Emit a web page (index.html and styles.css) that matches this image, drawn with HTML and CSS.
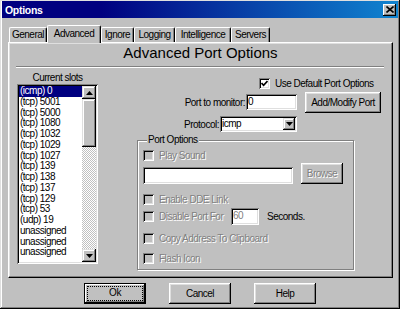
FILE: index.html
```html
<!DOCTYPE html>
<html lang="en">
<head>
    <meta charset="UTF-8">
    <title>Options</title>
    <link rel="stylesheet" href="styles.css">
</head>
<body>
<div class="window">
    <div class="titlebar">
        <span class="title">Options</span>
        <span class="close-btn">
            <svg width="8" height="7" viewBox="0 0 8 7"><path d="M0.5 0.5 L7.5 6.5 M7.5 0.5 L0.5 6.5" stroke="#000" stroke-width="1.6" fill="none"/></svg>
        </span>
    </div>

    <div class="tabs">
        <div class="tab tab-general">General</div>
        <div class="tab tab-advanced active">Advanced</div>
        <div class="tab tab-ignore">Ignore</div>
        <div class="tab tab-logging">Logging</div>
        <div class="tab tab-intel">Intelligence</div>
        <div class="tab tab-servers">Servers</div>
    </div>

    <div class="panel">
        <h1 class="heading">Advanced Port Options</h1>
        <div class="divider"></div>

        <div class="panel-body">
            <!-- slot list -->
            <div class="slots">
                <div class="slots-label">Current slots</div>
                <div class="listbox">
                    <ul class="list-items">
                        <li class="selected">(icmp) 0</li>
                        <li>(tcp) 5001</li>
                        <li>(tcp) 5000</li>
                        <li>(tcp) 1080</li>
                        <li>(tcp) 1032</li>
                        <li>(tcp) 1029</li>
                        <li>(tcp) 1027</li>
                        <li>(tcp) 139</li>
                        <li>(tcp) 138</li>
                        <li>(tcp) 137</li>
                        <li>(tcp) 129</li>
                        <li>(tcp) 53</li>
                        <li>(udp) 19</li>
                        <li>unassigned</li>
                        <li>unassigned</li>
                        <li>unassigned</li>
                    </ul>
                    <div class="scrollbar">
                        <div class="scroll-btn">
                            <svg width="7" height="4" viewBox="0 0 7 4"><path d="M3.5 0 L7 4 L0 4 Z" fill="#000"/></svg>
                        </div>
                        <div class="scroll-thumb"></div>
                        <div class="scroll-track"></div>
                        <div class="scroll-btn">
                            <svg width="7" height="4" viewBox="0 0 7 4"><path d="M0 0 L7 0 L3.5 4 Z" fill="#000"/></svg>
                        </div>
                    </div>
                </div>
            </div>

            <!-- port settings -->
            <div class="port-settings">
                <div class="check-row default-row">
                    <span class="check">
                        <svg width="7" height="7" viewBox="0 0 7 7"><path d="M0.5 3 L2.6 5.3 L6.5 1" stroke="#000" stroke-width="1.7" fill="none"/></svg>
                    </span>
                    <span>Use Default Port Options</span>
                </div>

                <div class="field-grid">
                    <div class="field">
                        <span>Port to monitor:</span>
                        <span class="textbox port-input">0</span>
                    </div>
                    <button class="btn btn-add">Add/Modify Port</button>
                    <div class="field">
                        <span>Protocol:</span>
                        <span class="textbox combo">
                            <span>icmp</span>
                            <span class="combo-btn">
                                <svg width="7" height="4" viewBox="0 0 7 4"><path d="M0 0 L7 0 L3.5 4 Z" fill="#000"/></svg>
                            </span>
                        </span>
                    </div>
                </div>

                <fieldset class="group">
                    <legend>Port Options</legend>
                    <div class="check-row">
                        <span class="check disabled"></span>
                        <span class="off">Play Sound</span>
                    </div>
                    <div class="sound-row">
                        <span class="textbox sound-input"></span>
                        <button class="btn btn-browse off" disabled>Browse</button>
                    </div>
                    <div class="check-row dde-row">
                        <span class="check disabled"></span>
                        <span class="off">Enable DDE Link</span>
                    </div>
                    <div class="check-row disable-row">
                        <span class="check disabled"></span>
                        <span class="off disable-label">Disable Port For</span>
                        <span class="textbox secs-input">60</span>
                        <span class="secs-label">Seconds.</span>
                    </div>
                    <div class="check-row copy-row">
                        <span class="check disabled"></span>
                        <span class="off">Copy Address To Clipboard</span>
                    </div>
                    <div class="check-row flash-row">
                        <span class="check disabled"></span>
                        <span class="off">Flash Icon</span>
                    </div>
                </fieldset>
            </div>
        </div>
    </div>

    <div class="buttons">
        <button class="btn btn-dialog btn-default"><span class="focus">Ok</span></button>
        <button class="btn btn-dialog">Cancel</button>
        <button class="btn btn-dialog">Help</button>
    </div>
</div>
</body>
</html>
```

FILE: styles.css
```css
* {
    box-sizing: border-box;
}
body {
    margin: 0;
    font-family: "Liberation Sans", Arial, sans-serif;
    font-size: 10px;
    letter-spacing: -0.5px;
    color: #000;
    background: #c0c0c0;
}
.window {
    width: 400px;
    height: 309px;
    padding: 1px 2px 0 2px;
    background: #c0c0c0;
    box-shadow: inset -1px -1px #000, inset 1px 1px #dfdfdf, inset -2px -2px #808080, inset 2px 2px #fff;
}

/* title bar */
.titlebar {
    height: 17px;
    display: flex;
    align-items: center;
    justify-content: space-between;
    padding: 0 2px 0 3px;
    background: linear-gradient(to right, #000080 25%, #1084d0);
    color: #fff;
}
.title {
    font-weight: bold;
    font-size: 10.5px;
    letter-spacing: -0.3px;
}
.close-btn {
    width: 13px;
    height: 12px;
    display: flex;
    align-items: center;
    justify-content: center;
    background: #c0c0c0;
    box-shadow: inset -1px -1px #000, inset 1px 1px #fff, inset -2px -2px #808080;
}

/* tabs */
.tabs {
    position: relative;
    z-index: 1;
    display: flex;
    align-items: flex-end;
    height: 17px;
    margin: 7px 0 0 7px;
}
.tab {
    height: 15px;
    line-height: 13px;
    text-align: center;
    background: #c0c0c0;
    border-top: 1px solid #fff;
    border-left: 1px solid #fff;
    border-right: 1px solid #000;
    border-radius: 2px 2px 0 0;
    box-shadow: inset -1px 0 #808080;
}
.tab.active {
    height: 18px;
    line-height: 15px;
    margin-bottom: -1px;
}
.tab-general { width: 38px; }
.tab-advanced { width: 54px; }
.tab-ignore { width: 33px; }
.tab-logging { width: 41px; }
.tab-intel { width: 56px; }
.tab-servers { width: 39px; }

/* tab page */
.panel {
    height: 236px;
    margin: 0 5px 0 6px;
    padding: 0 8px;
    border: 1px solid;
    border-color: #fff #000 #000 #fff;
    box-shadow: inset -1px -1px #808080, inset 1px 1px #dfdfdf;
}
.heading {
    margin: 1px 0 0;
    font-size: 15px;
    font-weight: normal;
    letter-spacing: 0;
    line-height: 18px;
    text-align: center;
}
.divider {
    height: 2px;
    margin: 4px 0 0 -1px;
    border-top: 1px solid #808080;
    border-bottom: 1px solid #fff;
}
.panel-body {
    display: grid;
    grid-template-columns: 81px 1fr;
    column-gap: 39px;
    padding-top: 4px;
}

/* list */
.slots-label {
    height: 12px;
    line-height: 12px;
    text-align: center;
}
.listbox {
    display: flex;
    width: 81px;
    height: 180px;
    padding: 2px;
    background: #fff;
    box-shadow: inset 1px 1px #808080, inset -1px -1px #fff, inset 2px 2px #000, inset -2px -2px #dfdfdf;
}
.list-items {
    flex: 1;
    margin: 0;
    padding: 0;
    list-style: none;
    overflow: hidden;
}
.list-items li {
    line-height: 10.75px;
    padding-left: 1px;
    white-space: nowrap;
}
.list-items li.selected {
    background: #000080;
    color: #fff;
}
.scrollbar {
    width: 14px;
    display: flex;
    flex-direction: column;
}
.scroll-btn {
    height: 13px;
    display: flex;
    align-items: center;
    justify-content: center;
    background: #c0c0c0;
    box-shadow: inset -1px -1px #000, inset 1px 1px #dfdfdf, inset -2px -2px #808080, inset 2px 2px #fff;
}
.scroll-thumb {
    height: 48px;
    background: #c0c0c0;
    box-shadow: inset -1px -1px #000, inset 1px 1px #dfdfdf, inset -2px -2px #808080, inset 2px 2px #fff;
}
.scroll-track {
    flex: 1;
    background-color: #fff;
    background-image: conic-gradient(#c0c0c0 25%, #fff 0 50%, #c0c0c0 0 75%, #fff 0);
    background-size: 2px 2px;
}

/* right side */
.check-row {
    display: flex;
    align-items: center;
    gap: 5px;
    height: 12px;
    white-space: nowrap;
}
.check {
    flex: none;
    width: 11px;
    height: 11px;
    display: flex;
    align-items: center;
    justify-content: center;
    background: #fff;
    box-shadow: inset 1px 1px #808080, inset -1px -1px #fff, inset 2px 2px #000, inset -2px -2px #dfdfdf;
}
.check.disabled {
    background: #c0c0c0;
}
.off {
    color: #808080;
    text-shadow: 1px 1px 0 #fff;
}
.default-row {
    margin-top: 5px;
    padding-left: 122px;
}
.field-grid {
    display: grid;
    grid-template-columns: 160px 76px;
    grid-template-rows: 20px 16px;
    column-gap: 8px;
    row-gap: 4px;
    margin-top: 3px;
}
.field {
    display: flex;
    align-items: center;
    justify-content: flex-end;
    gap: 1px;
    white-space: nowrap;
}
.textbox {
    display: block;
    height: 16px;
    padding: 2px 2px 0;
    line-height: 12px;
    background: #fff;
    box-shadow: inset 1px 1px #808080, inset -1px -1px #fff, inset 2px 2px #000, inset -2px -2px #dfdfdf;
}
.port-input {
    width: 51px;
}
.combo {
    width: 77px;
    display: flex;
    justify-content: space-between;
    padding-right: 2px;
}
.combo-btn {
    width: 12px;
    height: 12px;
    display: flex;
    align-items: center;
    justify-content: center;
    background: #c0c0c0;
    box-shadow: inset -1px -1px #000, inset 1px 1px #dfdfdf, inset -2px -2px #808080, inset 2px 2px #fff;
}

/* buttons */
.btn {
    height: 21px;
    padding: 0;
    border: none;
    font: inherit;
    letter-spacing: inherit;
    color: #000;
    background: #c0c0c0;
    box-shadow: inset -1px -1px #000, inset 1px 1px #fff, inset -2px -2px #808080, inset 2px 2px #dfdfdf;
}
.btn-add {
    width: 76px;
}
.btn.off {
    color: #808080;
}

/* group box */
.group {
    width: 217px;
    margin: 2px 0 0;
    padding: 3px 5px 5px;
    border: 1px solid #808080;
    box-shadow: inset 1px 1px #fff, 1px 1px #fff;
}
.group legend {
    margin-left: 4px;
    padding: 0 1px;
    line-height: 12px;
    background: #c0c0c0;
}
.sound-row {
    display: flex;
    align-items: flex-end;
    gap: 8px;
    height: 21px;
    margin-top: 2px;
}
.sound-input {
    width: 150px;
    height: 17px;
}
.btn-browse {
    width: 42px;
}
.dde-row {
    margin-top: 9px;
}
.disable-row {
    height: 17px;
    margin-top: 3px;
    gap: 0;
}
.disable-row .disable-label {
    width: 72px;
    margin-left: 5px;
}
.secs-input {
    width: 28px;
    height: 17px;
    color: #808080;
}
.secs-label {
    margin-left: 8px;
}
.copy-row {
    margin-top: 7px;
}
.flash-row {
    margin-top: 8px;
}

/* dialog buttons */
.buttons {
    display: flex;
    justify-content: center;
    gap: 23px;
    margin-top: 5px;
}
.btn-dialog {
    width: 62px;
}
.btn-default {
    padding: 4px;
    box-shadow: inset 0 0 0 1px #000, inset -2px -2px #000, inset 2px 2px #fff, inset -3px -3px #808080;
}
.focus {
    display: block;
    height: 100%;
    line-height: 11px;
    outline: 1px dotted #000;
}
```
